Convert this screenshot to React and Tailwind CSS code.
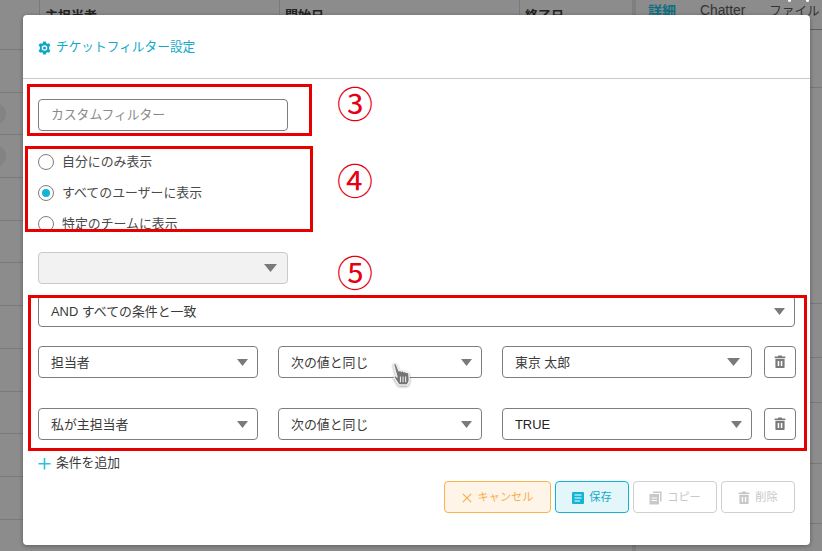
const FONT = "font-['Liberation_Sans','Noto_Sans_CJK_JP',sans-serif]";

function Caret({ width = 11 }) {
  return (
    <svg width={width} height={Math.round(width * 0.65)} viewBox="0 0 13 8" preserveAspectRatio="none" className="shrink-0">
      <path d="M0 0H13L6.5 8Z" fill="#7a7a7a" />
    </svg>
  );
}

function Select({ label, className = "", text = "text-[#3a3a3a]", caret = 11, inset = "pr-[9px]" }) {
  return (
    <div className={`flex h-8 shrink-0 items-center justify-between rounded-[4px] border border-[#7d7d7d] bg-white pl-3 ${inset} ${className}`}>
      <span className={`pt-[1px] text-[12.9px] ${text}`}>{label}</span>
      <Caret width={caret} />
    </div>
  );
}

function Trash({ color = "#7a7a7a", size = 12 }) {
  return (
    <svg width={size} height={size * 1.1} viewBox="0 0 12 13.2" fill={color}>
      <path d="M4.3 0.4H7.7L8.2 1.6H11.4V3H0.6V1.6H3.8Z" />
      <path d="M1.4 3.8H10.6V12.2Q10.6 13 9.8 13H2.2Q1.4 13 1.4 12.2ZM3.7 6V11H5.2V6ZM6.8 6V11H8.3V6Z" fillRule="evenodd" />
    </svg>
  );
}

function TrashButton() {
  return (
    <button className="flex h-8 w-8 shrink-0 items-center justify-center rounded-[4px] border border-[#7d7d7d] bg-white">
      <Trash />
    </button>
  );
}

function Radio({ label, checked }) {
  return (
    <label className="flex h-[31px] items-center">
      <span className="flex h-4 w-4 items-center justify-center rounded-full border border-[#7d7d7d] bg-white">
        {checked && <span className="h-2 w-2 rounded-full bg-[#12b5d6]" />}
      </span>
      <span className="ml-2 text-[12.9px] text-[#4a4a4a]">{label}</span>
    </label>
  );
}

function Backdrop() {
  const leftRows = [0, 1, 2, 3, 4, 5, 6, 7, 8, 9, 10, 11];
  const rightRows = [58, 216, 54, 45, 61, 60];
  return (
    <div className="flex h-full w-full bg-[#8c8c8c]">
      <div className="w-[632px] shrink-0">
        <div className="grid h-[50px] grid-cols-[40px_240px_240px_112px] border-b border-[#7a7a7a] text-[13px] text-[#222]">
          <div className="border-r border-[#7a7a7a]" />
          <div className="border-r border-[#7a7a7a] pl-[5px] pt-[6px] font-bold">主担当者</div>
          <div className="border-r border-[#7a7a7a] pl-[5px] pt-[6px] font-bold">開始日</div>
          <div className="pl-[5px] pt-[6px] font-bold">終了日</div>
        </div>
        {leftRows.map((r) => (
          <div key={r} className="flex h-[42.7px] items-center overflow-hidden border-b border-[#7a7a7a]">
            {(r === 1 || r === 2) && <span className="ml-[-16px] h-[22px] w-[22px] rounded-full bg-[#838383]" />}
          </div>
        ))}
      </div>
      <div className="w-1 shrink-0 bg-[#7f7f7f]" />
      <div className="min-w-0 flex-1">
        <div className="flex h-[30px] items-start whitespace-nowrap border-b border-[#5f5f5f] pl-3 pt-[1px] text-[14px] text-[#333]">
          <span className="shrink-0 font-bold text-[#0b6f80]">詳細</span>
          <span className="ml-6 shrink-0 text-[13.8px]">Chatter</span>
          <span className="ml-[24px] shrink-0 text-[12.6px] leading-[21px] text-[#333]">ファイル</span>
        </div>
        {rightRows.map((h, i) => (
          <div key={i} className="border-b border-[#7a7a7a]" style={{ height: h }} />
        ))}
      </div>
    </div>
  );
}

function Hand() {
  return (
    <svg width="24" height="27" viewBox="0 0 22 26" className="absolute left-[390px] top-[362px]">
      <defs>
        <filter id="hs" x="-30%" y="-30%" width="160%" height="160%">
          <feDropShadow dx="0" dy="1" stdDeviation="1" floodColor="#000" floodOpacity="0.45" />
        </filter>
      </defs>
      <path
        d="M3 2.5C3 1 5 1 5.6 2.5L8 8.5C8.6 7.6 9.8 7.8 10.3 9C10.9 8.2 12.2 8.4 12.7 9.5C13.4 8.8 14.6 9 15 10.2C15.8 9.6 17.4 9.9 17.6 11.5L18 17C18 19 17.2 20.5 16 22H8L3.5 15C2.8 13.6 4.2 12.6 5.4 13.6L6.2 14.4Z"
        fill="#747474"
        stroke="#eeeeee"
        strokeWidth="1.3"
        strokeLinejoin="round"
        filter="url(#hs)"
      />
      <path d="M9.5 14V19.5M12 14V19.5M14.5 14V19.5" stroke="#eee" strokeWidth="1" />
    </svg>
  );
}

function Annotations() {
  const numeral = "absolute text-[36px] leading-none text-[#e60012] font-['Noto_Sans_CJK_JP',sans-serif]";
  return (
    <>
      <div className="absolute left-[27px] top-[84px] h-[52px] w-[285px] border-[3px] border-[#e60000]" />
      <div className="absolute left-[25px] top-[146px] h-[86px] w-[288px] border-[3px] border-[#e60000]" />
      <div className="absolute left-[28px] top-[295px] h-[156px] w-[779px] border-[3px] border-[#e60000]" />
      <span className={`${numeral} left-[337px] top-[84px]`}>③</span>
      <span className={`${numeral} left-[337px] top-[161px]`}>④</span>
      <span className={`${numeral} left-[337px] top-[253px]`}>⑤</span>
    </>
  );
}

export default function App() {
  return (
    <div className={`relative h-[551px] w-[822px] overflow-hidden ${FONT}`}>
      <Backdrop />
      <span className="absolute left-[788px] top-[-1px] h-[3px] w-[3px] rounded-full bg-white" />
      <span className="absolute left-[806px] top-[-1px] h-[3px] w-[3px] rounded-full bg-white" />
      <div className="absolute left-[23px] top-[15px] h-[530px] w-[787px] rounded-[4px] bg-white shadow-[0_1px_4px_rgba(0,0,0,0.35)]">
        <div className="flex h-[64px] items-center border-b border-[#c9c9c9] pl-[15px] pt-[2px]">
          <svg width="13" height="14" viewBox="0 0 13 14" fill="#0fa6c6">
            <path fillRule="evenodd" d="M5.2 0.5H7.8L8.2 2.2L9.4 2.8L11 2.2L12.4 4.5L11.1 5.7V8.3L12.4 9.5L11 11.8L9.4 11.2L8.2 11.8L7.8 13.5H5.2L4.8 11.8L3.6 11.2L2 11.8L0.6 9.5L1.9 8.3V5.7L0.6 4.5L2 2.2L3.6 2.8L4.8 2.2ZM6.5 4.2A2.8 2.8 0 1 0 6.5 9.8A2.8 2.8 0 1 0 6.5 4.2Z" />
            <circle cx="6.5" cy="7" r="1.5" />
          </svg>
          <span className="ml-[5px] text-[12.7px] text-[#12a9c9]">チケットフィルター設定</span>
        </div>
        <div className="px-[15px]">
          <div className="mt-5 flex h-8 w-[250px] items-center rounded-[4px] border border-[#7d7d7d] bg-white pl-3 text-[12.8px] text-[#8a8a8a]">
            カスタムフィルター
          </div>
          <div className="mt-[15px] flex flex-col">
            <Radio label="自分にのみ表示" />
            <Radio label="すべてのユーザーに表示" checked />
            <Radio label="特定のチームに表示" />
          </div>
          <div className="mt-[13px] flex h-8 w-[250px] items-center justify-end rounded-[4px] border border-[#c9c9c9] bg-[#f2f2f2] pr-[10px]">
            <Caret width={13} />
          </div>
          <Select label="AND すべての条件と一致" className="mt-[11px] w-[757px]" />
          <div className="mt-[19px] flex items-center">
            <Select label="担当者" className="w-[220px]" />
            <Select label="次の値と同じ" className="ml-5 w-[204px]" />
            <Select label="東京 太郎" className="ml-5 w-[250px]" caret={13} inset="pr-[11px]" />
            <div className="ml-3"><TrashButton /></div>
          </div>
          <div className="mt-[30px] flex items-center">
            <Select label="私が主担当者" className="w-[220px]" />
            <Select label="次の値と同じ" className="ml-5 w-[204px]" />
            <Select label="TRUE" className="ml-5 w-[250px]" text="text-[#222]" />
            <div className="ml-3"><TrashButton /></div>
          </div>
          <div className="mt-[15px] flex h-4 items-center">
            <svg width="13" height="13" viewBox="0 0 13 13" stroke="#2cc0de" strokeWidth="1.6">
              <path d="M6.5 1V12.5M0.5 6.7H12.5" />
            </svg>
            <span className="ml-[5px] text-[12.8px] text-[#3a3a3a]">条件を追加</span>
          </div>
          <div className="mt-[10px] flex w-[757px] justify-end gap-1 text-[11.2px]">
            <button className="flex h-8 w-[107px] items-center justify-center gap-[6px] rounded-[4px] border border-[#fbb34d] bg-[#fff4e8] pt-[1px] text-[#f9ae48]">
              <svg width="10" height="10" viewBox="0 0 12 12" stroke="#f9ae48" strokeWidth="1.5"><path d="M1 1L11 11M11 1L1 11" /></svg>
              キャンセル
            </button>
            <button className="flex h-8 w-[74px] items-center justify-center gap-[5px] rounded-[4px] border border-[#12b5d6] bg-[#e3f6fa] pt-[1px] text-[#12a9c9]">
              <svg width="12" height="12" viewBox="0 0 12 12">
                <rect width="12" height="12" rx="1" fill="#12b5d6" />
                <path d="M2.5 3H9.5M2.5 6H9.5M2.5 9H8" stroke="#fff" strokeWidth="1.2" />
              </svg>
              保存
            </button>
            <button className="flex h-8 w-[84px] items-center justify-center gap-[5px] rounded-[4px] border border-[#cfcfcf] bg-white pt-[1px] text-[#c8c8c8]">
              <svg width="13" height="14" viewBox="0 0 13 14" fill="#c8c8c8">
                <path d="M4 0.5H12.5V10.5H11V2H4Z" />
                <path d="M0.5 3H10V13.5H0.5ZM2.5 6.5V7.5H8V6.5ZM2.5 9V10H8V9Z" fillRule="evenodd" />
              </svg>
              コピー
            </button>
            <button className="flex h-8 w-[74px] items-center justify-center gap-[5px] rounded-[4px] border border-[#cfcfcf] bg-white pt-[1px] text-[#c8c8c8]">
              <Trash color="#c8c8c8" />
              削除
            </button>
          </div>
        </div>
      </div>
      <Annotations />
      <Hand />
    </div>
  );
}
